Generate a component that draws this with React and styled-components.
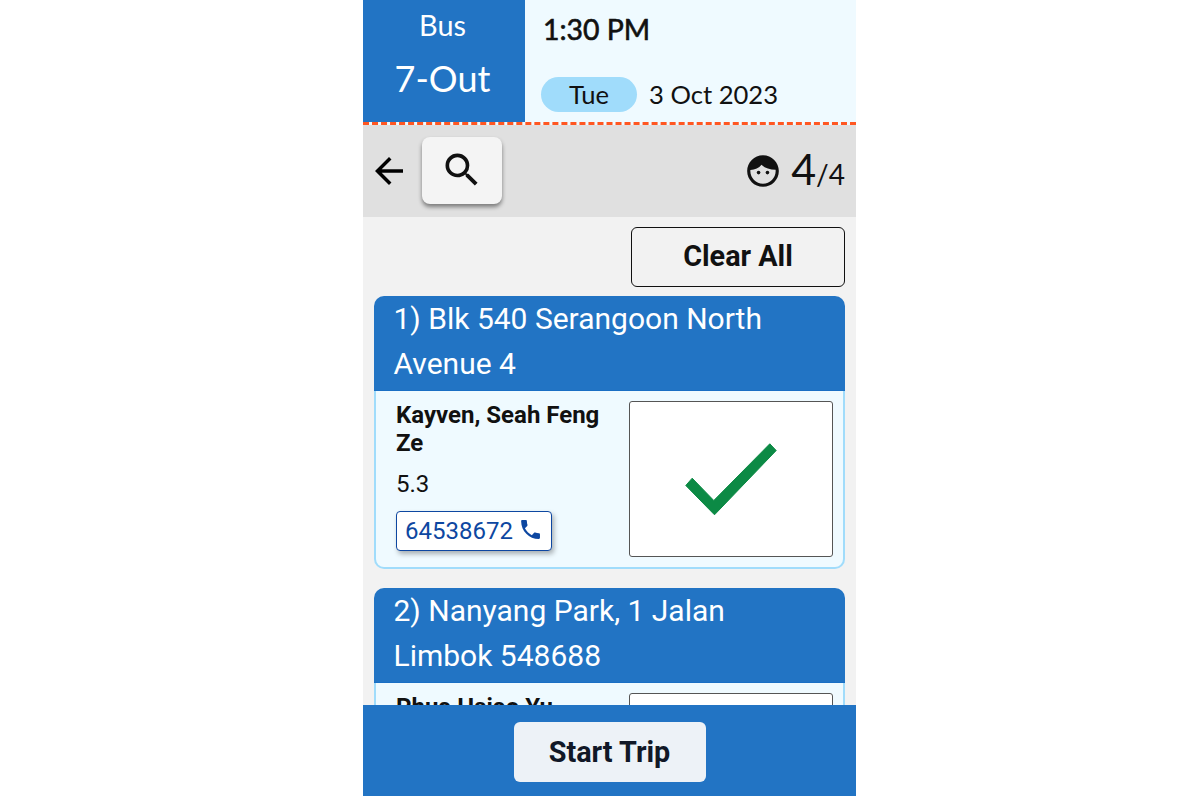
import React from "react";
import styled, { createGlobalStyle } from "styled-components";

const Global = createGlobalStyle`
  html, body { margin: 0; padding: 0; height: 100%; background: #fff; overflow: hidden; }
  * { box-sizing: border-box; }
`;

const Phone = styled.div`
  width: 493px;
  height: 796px;
  margin-left: 363px;
  display: flex;
  flex-direction: column;
  font-family: Roboto, sans-serif;
  color: #111;
`;

const Header = styled.header`
  display: flex;
  height: 125px;
  flex: none;
  background: #effaff;
  border-bottom: 3px dashed #ff5722;
  font-family: Lato, sans-serif;
`;

const RouteBox = styled.div`
  width: 162px;
  padding-right: 3px;
  background: #2274c4;
  color: #fff;
  display: flex;
  flex-direction: column;
  align-items: center;
`;

const RouteType = styled.div`
  font-size: 28.8px;
  line-height: 34px;
  margin-top: 8px;
`;

const RouteName = styled.div`
  font-size: 36px;
  line-height: 44px;
  margin-top: 14px;
`;

const TimeBox = styled.div`
  flex: 1;
  padding: 11px 0 0 16px;
`;

const Time = styled.div`
  font-size: 28.4px;
  font-weight: 400;
  -webkit-text-stroke: 0.6px #111;
  line-height: 36px;
  margin-left: 2px;
  color: #111;
`;

const DateRow = styled.div`
  display: flex;
  align-items: center;
  gap: 12px;
  margin-top: 30px;
  font-size: 25.6px;
  color: #111;
`;

const DayPill = styled.span`
  width: 96px;
  height: 35px;
  padding-bottom: 2px;
  border-radius: 18px;
  background: #a0dcfb;
  display: flex;
  align-items: center;
  justify-content: center;
`;

const DateText = styled.span`
  margin-bottom: 2px;
`;

const Toolbar = styled.div`
  height: 92px;
  flex: none;
  background: #e0e0e0;
  display: flex;
  align-items: center;
  padding: 0 11px 0 5px;
`;

const IconButton = styled.button`
  width: 80px;
  height: 67px;
  margin: 0 0 2px 12px;
  border: none;
  border-radius: 8px;
  background: #f4f4f4;
  box-shadow: 0 3px 4px rgba(0, 0, 0, 0.45);
  display: flex;
  align-items: center;
  justify-content: center;
  padding: 0;
`;

const Count = styled.div`
  margin-left: auto;
  display: flex;
  align-items: center;
  font-family: Lato, sans-serif;
  color: #111;
`;

const CountValue = styled.div`
  display: flex;
  align-items: baseline;
  margin: 0 0 6px 9px;
`;

const CountBig = styled.span`
  font-size: 43px;
  line-height: 1;
`;

const CountSmall = styled.span`
  font-size: 28px;
  line-height: 1;
`;

const List = styled.main`
  flex: 1;
  min-height: 0;
  overflow: hidden;
  background: #f2f2f2;
  padding: 10px 11px 0;
  display: flex;
  flex-direction: column;
`;

const ClearButton = styled.button`
  align-self: flex-end;
  flex: none;
  width: 214px;
  height: 60px;
  border: 1px solid #111;
  border-radius: 6px;
  background: #f2f2f2;
  font: 700 28.8px Roboto, sans-serif;
  color: #111;
  padding: 0 0 2px;
`;

const Card = styled.section`
  flex: none;
  margin-top: ${(p) => p.$gap}px;
`;

const CardTitle = styled.h2`
  margin: 0;
  background: #2274c4;
  color: #fff;
  border-radius: 10px 10px 0 0;
  font-size: 30px;
  font-weight: 400;
  line-height: 45px;
  padding: 0 30px 0 19.5px;
  height: 95px;
  border-bottom: 1px solid #1a6fc4;
`;

const CardBody = styled.div`
  background: #effaff;
  border: 2px solid #a0dcfb;
  border-top: none;
  border-radius: 0 0 10px 10px;
  display: flex;
  justify-content: space-between;
  padding: 10px 10px 10px 20px;
  height: 178px;
`;

const Info = styled.div`
  width: 215px;
`;

const Name = styled.div`
  font-size: 24px;
  font-weight: 700;
  line-height: 28px;
  color: #111;
`;

const Unit = styled.div`
  font-size: 24px;
  line-height: 28px;
  margin-top: 13px;
  color: #111;
`;

const PhoneLink = styled.a`
  display: inline-flex;
  align-items: center;
  gap: 5px;
  height: 40px;
  width: 156px;
  margin-top: 13px;
  padding: 0 8px;
  background: #fff;
  border: 1px solid #0d47a1;
  border-radius: 4px;
  box-shadow: 2px 3px 5px rgba(0, 0, 0, 0.3);
  color: #0d47a1;
  font-size: 24px;
`;

const CheckBox = styled.div`
  width: 204px;
  height: 156px;
  flex: none;
  background: #fff;
  border: 1px solid #555;
  border-radius: 3px;
  display: flex;
  align-items: center;
  justify-content: center;
`;

const Footer = styled.footer`
  height: 91px;
  flex: none;
  background: #2274c4;
  display: flex;
  align-items: center;
  justify-content: center;
  padding-top: 3px;
`;

const StartButton = styled.button`
  width: 192px;
  height: 60px;
  border: none;
  border-radius: 6px;
  background: #edf2f7;
  color: #111827;
  font: 700 28.8px Roboto, sans-serif;
`;

const BackIcon = () => (
  <svg width="42" height="42" viewBox="0 0 24 24">
    <path d="M20 11H7.83l5.59-5.59L12 4l-8 8 8 8 1.41-1.41L7.83 13H20v-2z" fill="#000" />
  </svg>
);

const SearchIcon = () => (
  <svg width="44" height="44" viewBox="0 0 24 24">
    <path
      d="M15.5 14h-.79l-.28-.27A6.47 6.47 0 0 0 16 9.5 6.5 6.5 0 1 0 9.5 16c1.61 0 3.09-.59 4.23-1.57l.27.28v.79l5 4.99L20.49 19l-4.99-5zm-6 0C7.01 14 5 11.99 5 9.5S7.01 5 9.5 5 14 7.01 14 9.5 11.99 14 9.5 14z"
      fill="#111"
    />
  </svg>
);

const FaceIcon = () => (
  <svg width="38" height="38" viewBox="0 0 24 24">
    <path
      fill="#111"
      fillRule="evenodd"
      d="M12 2C6.48 2 2 6.48 2 12s4.48 10 10 10 10-4.48 10-10S17.52 2 12 2zM4.05 11.4c2.9-.2 5.4-1.4 7-3.4 1.9 1.9 5.3 3.2 8.9 3.2.03.3.05.55.05.8 0 4.4-3.6 8-8 8s-8-3.6-8-8c0-.2.02-.4.05-.6z"
    />
    <circle cx="9.2" cy="13" r="1.15" fill="#111" />
    <circle cx="14.8" cy="13" r="1.15" fill="#111" />
  </svg>
);

const PhoneIcon = () => (
  <svg width="27" height="27" viewBox="0 0 24 24" style={{ marginTop: -4 }}>
    <path
      fill="#0d47a1"
      d="M6.62 10.79c1.44 2.83 3.76 5.14 6.59 6.59l2.2-2.2c.27-.27.67-.36 1.02-.24 1.12.37 2.33.57 3.57.57.55 0 1 .45 1 1V20c0 .55-.45 1-1 1-9.39 0-17-7.61-17-17 0-.55.45-1 1-1h3.5c.55 0 1 .45 1 1 0 1.25.2 2.45.57 3.57.11.35.03.74-.25 1.02l-2.2 2.2z"
    />
  </svg>
);

const CheckIcon = () => (
  <svg width="92" height="73" viewBox="-0.5 -0.5 92 73">
    <path
      d="M0.3 42 L6.7 34.7 L28.3 57 L84.3 0.3 L90.7 7 L29 71.3 Z"
      fill="#0c8a45"
      stroke="#0c8a45"
      strokeWidth="1"
    />
  </svg>
);

const stops = [
  { title: "1) Blk 540 Serangoon North Avenue 4", name: "Kayven, Seah Feng Ze", unit: "5.3", phone: "64538672", gap: 9 },
  { title: "2) Nanyang Park, 1 Jalan Limbok 548688", name: "Phua Hsiao Yu", unit: "2.1", phone: "64538672", gap: 19 },
];

export default function App() {
  return (
    <>
      <Global />
      <Phone>
        <Header>
          <RouteBox>
            <RouteType>Bus</RouteType>
            <RouteName>7-Out</RouteName>
          </RouteBox>
          <TimeBox>
            <Time>1:30 PM</Time>
            <DateRow>
              <DayPill>Tue</DayPill>
              <DateText>3 Oct 2023</DateText>
            </DateRow>
          </TimeBox>
        </Header>
        <Toolbar>
          <BackIcon />
          <IconButton aria-label="Search">
            <SearchIcon />
          </IconButton>
          <Count>
            <FaceIcon />
            <CountValue>
              <CountBig>4</CountBig>
              <CountSmall>/4</CountSmall>
            </CountValue>
          </Count>
        </Toolbar>
        <List>
          <ClearButton>Clear All</ClearButton>
          {stops.map((s) => (
            <Card key={s.title} $gap={s.gap}>
              <CardTitle>{s.title}</CardTitle>
              <CardBody>
                <Info>
                  <Name>{s.name}</Name>
                  <Unit>{s.unit}</Unit>
                  <PhoneLink>
                    {s.phone}
                    <PhoneIcon />
                  </PhoneLink>
                </Info>
                <CheckBox>
                  <CheckIcon />
                </CheckBox>
              </CardBody>
            </Card>
          ))}
        </List>
        <Footer>
          <StartButton>Start Trip</StartButton>
        </Footer>
      </Phone>
    </>
  );
}
